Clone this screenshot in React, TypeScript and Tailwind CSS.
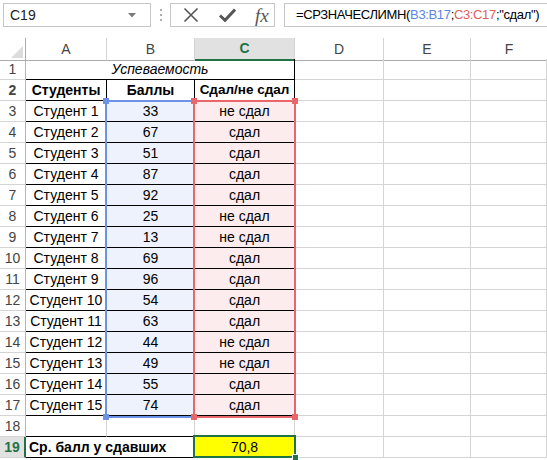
import React from "react";

const rows: [number, string][] = [
  [33, "не сдал"],
  [67, "сдал"],
  [51, "сдал"],
  [87, "сдал"],
  [92, "сдал"],
  [25, "не сдал"],
  [13, "не сдал"],
  [69, "сдал"],
  [96, "сдал"],
  [54, "сдал"],
  [63, "сдал"],
  [44, "не сдал"],
  [49, "не сдал"],
  [55, "сдал"],
  [74, "сдал"],
];

const cols = "grid grid-cols-[26px_81px_88px_100px_89px_87px_1fr]";

function RowHead({ n, active }: { n: number; active?: boolean }) {
  return (
    <div
      className={`flex h-[21px] items-center justify-center border-b border-[#d4d4d4] ${
        active
          ? "border-r-2 border-r-[#217346] bg-[#e1e1e1] font-bold text-[#217346]"
          : "border-r border-r-[#b5b5b5] bg-white text-[#444]"
      }`}
    >
      {n}
    </div>
  );
}

function Blank() {
  return <div className="h-[21px] border-b border-r border-[#d4d4d4]" />;
}

export default function App() {
  return (
    <div className="relative h-[460px] w-[547px] overflow-hidden bg-white font-['Liberation_Sans',Arial,sans-serif] text-[14px] text-black">
      {/* formula bar */}
      <div className="flex h-[38px] items-start pt-[3px]">
        <div className="ml-[3px] flex h-[24px] w-[148px] shrink-0 items-center justify-between border border-[#c6c6c6] pl-[6px] pr-[14px] text-[#222]">
          <span>C19</span>
          <svg width="8" height="5" viewBox="0 0 8 5">
            <path d="M0 0h8L4 4.5z" fill="#7a7a7a" />
          </svg>
        </div>
        <div className="mx-[5px] flex h-[24px] w-[9px] shrink-0 flex-col items-center justify-center gap-[3px]">
          <span className="h-[2px] w-[2px] bg-[#b0b0b0]" />
          <span className="h-[2px] w-[2px] bg-[#b0b0b0]" />
          <span className="h-[2px] w-[2px] bg-[#b0b0b0]" />
        </div>
        <div className="flex h-[24px] w-[105px] shrink-0 items-center border border-[#c6c6c6] pl-[12px]">
          <svg width="16" height="16" viewBox="0 0 16 16">
            <path d="M1.5 1.5l13 13M14.5 1.5l-13 13" stroke="#555" strokeWidth="1.6" fill="none" />
          </svg>
          <svg className="ml-[20px]" width="17" height="14" viewBox="0 0 17 14">
            <path d="M1 7.5l5 4.8L16 1.5" stroke="#555" strokeWidth="3" fill="none" />
          </svg>
          <span className="ml-[19px] font-['Liberation_Serif',serif] text-[19px] italic leading-none text-[#555]">
            fx
          </span>
        </div>
        <div className="ml-[9px] flex h-[24px] min-w-0 flex-1 items-center overflow-hidden whitespace-nowrap border border-r-0 border-[#c6c6c6] pl-[11px] text-[13px] tracking-[-0.35px]">
          =СРЗНАЧЕСЛИМН(<span className="text-[#5b86e0]">B3:B17</span>;
          <span className="text-[#e0605e]">C3:C17</span>;"сдал")
        </div>
      </div>

      {/* sheet */}
      <div className="relative">
        {/* column headers */}
        <div className={`${cols} h-[21px] text-[#444]`}>
          <div className="relative border-b border-r border-[#ababab] bg-white">
            <svg className="absolute bottom-[2px] right-[2px]" width="12" height="12" viewBox="0 0 12 12">
              <path d="M12 0V12H0z" fill="#dcdcdc" />
            </svg>
          </div>
          <div className="flex items-center justify-center border-b border-r border-[#d4d4d4] border-b-[#ababab] bg-white">A</div>
          <div className="flex items-center justify-center border-b border-r border-[#d4d4d4] border-b-[#ababab] bg-white">B</div>
          <div className="flex items-center justify-center border-b-2 border-r border-[#d4d4d4] border-b-[#217346] bg-[#e1e1e1] font-bold text-[#217346]">C</div>
          <div className="flex items-center justify-center border-b border-r border-[#d4d4d4] border-b-[#ababab] bg-white">D</div>
          <div className="flex items-center justify-center border-b border-r border-[#d4d4d4] border-b-[#ababab] bg-white">E</div>
          <div className="flex items-center justify-center border-b border-[#ababab] bg-white">F</div>
        </div>

        {/* row 1 */}
        <div className={cols}>
          <RowHead n={1} />
          <div className="col-span-3 flex h-[21px] items-center justify-center border-b border-r border-black italic">
            Успеваемость
          </div>
          <Blank />
          <Blank />
          <Blank />
        </div>

        {/* row 2 */}
        <div className={`${cols} font-bold`}>
          <RowHead n={2} />
          <div className="flex h-[21px] items-center justify-center border-b border-r border-black">Студенты</div>
          <div className="flex h-[21px] items-center justify-center border-b border-r border-black">Баллы</div>
          <div className="flex h-[21px] items-center justify-center whitespace-nowrap border-b border-r border-black text-[13.5px]">Сдал/не сдал</div>
          <Blank />
          <Blank />
          <Blank />
        </div>

        {rows.map(([score, status], i) => (
          <div key={i} className={cols}>
            <RowHead n={i + 3} />
            <div className="flex h-[21px] items-center justify-center border-b border-r border-black">Студент {i + 1}</div>
            <div className="flex h-[21px] items-center justify-center border-b border-r border-black bg-[#edf2fc]">{score}</div>
            <div className="flex h-[21px] items-center justify-center border-b border-r border-black bg-[#fdeced]">{status}</div>
            <Blank />
            <Blank />
            <Blank />
          </div>
        ))}

        {/* row 18 */}
        <div className={cols}>
          <RowHead n={18} />
          <div className="h-[21px] border-b border-r border-[#d4d4d4] border-b-black" />
          <div className="h-[21px] border-b border-r border-[#d4d4d4] border-b-black" />
          <div className="h-[21px] border-b border-r border-[#d4d4d4] border-b-black" />
          <Blank />
          <Blank />
          <Blank />
        </div>

        {/* row 19 */}
        <div className={cols}>
          <RowHead n={19} active />
          <div className="col-span-2 flex h-[21px] items-center border-b border-r border-black pl-[3px] font-bold whitespace-nowrap">
            Ср. балл у сдавших
          </div>
          <div className="flex h-[21px] items-center justify-center border-b border-r border-black bg-[#ffff00]">70,8</div>
          <Blank />
          <Blank />
          <Blank />
        </div>

        {/* blue range B3:B17 */}
        <div className="absolute left-[105px] top-[62px] h-[318px] w-[90px] border-2 border-[#6b92e6]">
          <span className="absolute -left-[4px] -top-[4px] h-[6px] w-[6px] bg-[#6b92e6]" />
          <span className="absolute -bottom-[4px] -left-[4px] h-[6px] w-[6px] bg-[#6b92e6]" />
        </div>
        {/* red range C3:C17 */}
        <div className="absolute left-[193px] top-[62px] h-[318px] w-[103px] border-2 border-[#e8676a]">
          <span className="absolute -left-[4px] -top-[4px] h-[6px] w-[6px] bg-[#e8676a]" />
          <span className="absolute -right-[4px] -top-[4px] h-[6px] w-[6px] bg-[#e8676a]" />
          <span className="absolute -bottom-[4px] -left-[4px] h-[6px] w-[6px] bg-[#e8676a]" />
          <span className="absolute -bottom-[4px] -right-[4px] h-[6px] w-[6px] bg-[#e8676a]" />
        </div>
        {/* active cell C19 */}
        <div className="absolute left-[193px] top-[397px] h-[23px] w-[103px] border-2 border-[#217346]">
          <span className="absolute -bottom-[5px] -right-[5px] h-[7px] w-[7px] border border-white bg-[#217346]" />
        </div>
      </div>
    </div>
  );
}
